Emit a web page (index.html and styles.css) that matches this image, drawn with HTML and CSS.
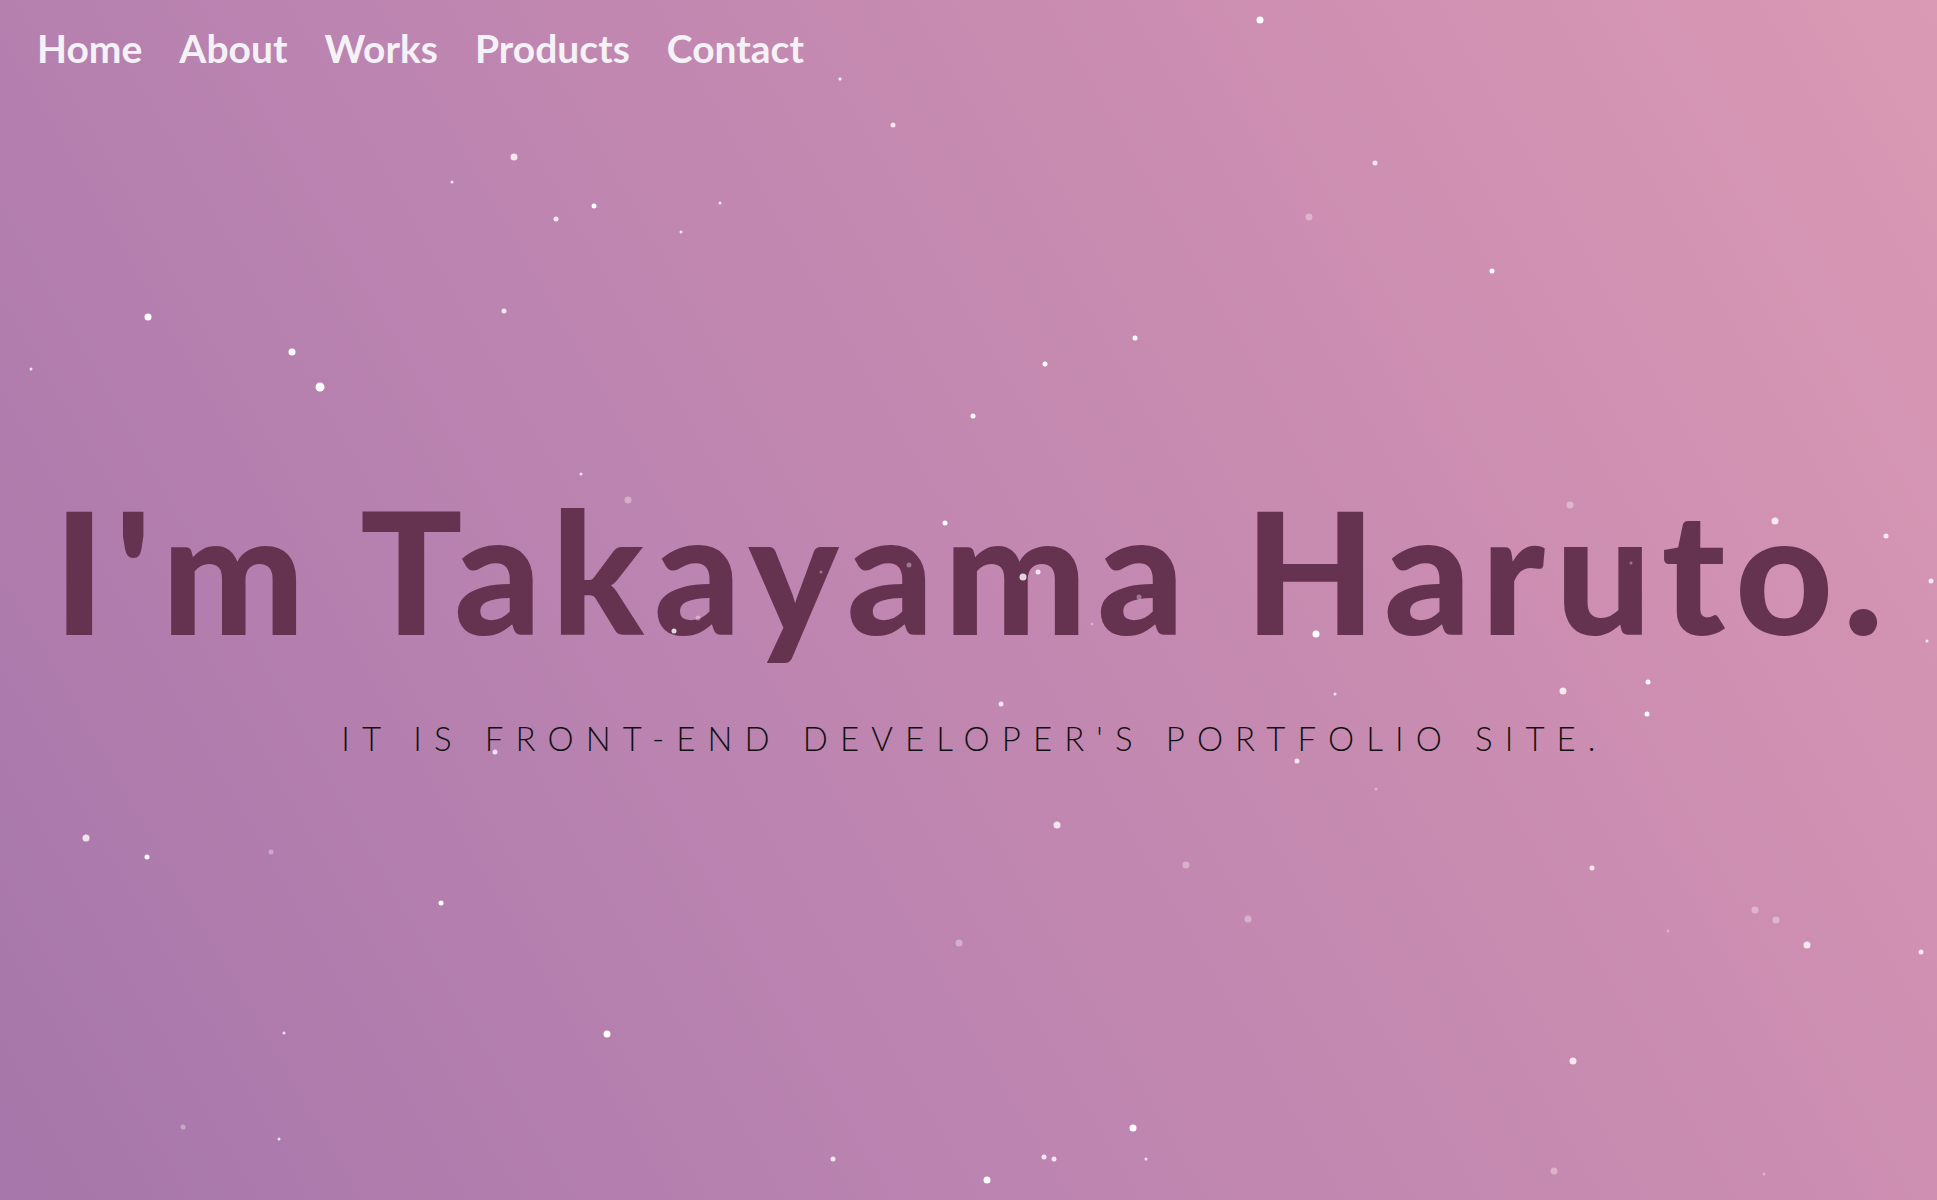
FILE: index.html
```html
<!DOCTYPE html>
<html lang="en">
<head>
<meta charset="utf-8">
<title>Takayama Haruto</title>
<link rel="stylesheet" href="styles.css">
</head>
<body>
<div class="page">
  <nav class="nav">
    <a href="#" class="nav-link">Home</a>
    <a href="#" class="nav-link">About</a>
    <a href="#" class="nav-link">Works</a>
    <a href="#" class="nav-link">Products</a>
    <a href="#" class="nav-link">Contact</a>
  </nav>
  <main class="hero">
    <h1 class="hero-title">I'm Takayama Haruto.</h1>
    <p class="hero-sub">IT IS FRONT-END DEVELOPER'S PORTFOLIO SITE.</p>
  </main>
  <div class="particles">
    <span class="dot d3" style="left:1260px;top:20px"></span>
    <span class="dot d1" style="left:840px;top:79px"></span>
    <span class="dot d2 faint" style="left:893px;top:125px"></span>
    <span class="dot d3 faint" style="left:514px;top:157px"></span>
    <span class="dot d2 faint" style="left:1375px;top:163px"></span>
    <span class="dot d1 faint" style="left:452px;top:182px"></span>
    <span class="dot d2" style="left:594px;top:206px"></span>
    <span class="dot d2 faint" style="left:556px;top:219px"></span>
    <span class="dot d1 faint" style="left:720px;top:203px"></span>
    <span class="dot d1 faint" style="left:681px;top:232px"></span>
    <span class="dot d3 dim" style="left:1309px;top:217px"></span>
    <span class="dot d2" style="left:1492px;top:271px"></span>
    <span class="dot d3" style="left:148px;top:317px"></span>
    <span class="dot d2 faint" style="left:504px;top:311px"></span>
    <span class="dot d3" style="left:292px;top:352px"></span>
    <span class="dot d2" style="left:1135px;top:338px"></span>
    <span class="dot d1 faint" style="left:31px;top:369px"></span>
    <span class="dot d4" style="left:320px;top:387px"></span>
    <span class="dot d2" style="left:1045px;top:364px"></span>
    <span class="dot d2" style="left:973px;top:416px"></span>
    <span class="dot d1 faint" style="left:581px;top:474px"></span>
    <span class="dot d3 dim" style="left:628px;top:500px"></span>
    <span class="dot d3 dim" style="left:1570px;top:505px"></span>
    <span class="dot d2" style="left:945px;top:523px"></span>
    <span class="dot d3 faint" style="left:1775px;top:521px"></span>
    <span class="dot d2 faint" style="left:1886px;top:536px"></span>
    <span class="dot d2 faint" style="left:1931px;top:581px"></span>
    <span class="dot d1 faint" style="left:1927px;top:641px"></span>
    <span class="dot d3" style="left:1316px;top:634px"></span>
    <span class="dot d3 faint" style="left:1563px;top:691px"></span>
    <span class="dot d2" style="left:1648px;top:682px"></span>
    <span class="dot d2" style="left:1647px;top:714px"></span>
    <span class="dot d1 faint" style="left:1335px;top:694px"></span>
    <span class="dot d2 faint" style="left:1001px;top:704px"></span>
    <span class="dot d2 faint" style="left:495px;top:752px"></span>
    <span class="dot d2 faint" style="left:1297px;top:761px"></span>
    <span class="dot d1 dim" style="left:1376px;top:789px"></span>
    <span class="dot d3 faint" style="left:1057px;top:825px"></span>
    <span class="dot d3 faint" style="left:86px;top:838px"></span>
    <span class="dot d2" style="left:147px;top:857px"></span>
    <span class="dot d2 dim" style="left:271px;top:852px"></span>
    <span class="dot d2 faint" style="left:1592px;top:868px"></span>
    <span class="dot d3 dim" style="left:1186px;top:865px"></span>
    <span class="dot d2" style="left:441px;top:903px"></span>
    <span class="dot d3 dim" style="left:1755px;top:910px"></span>
    <span class="dot d3 dim" style="left:1776px;top:920px"></span>
    <span class="dot d3 dim" style="left:1248px;top:919px"></span>
    <span class="dot d1 dim" style="left:1668px;top:931px"></span>
    <span class="dot d3 faint" style="left:1807px;top:945px"></span>
    <span class="dot d3 dim" style="left:959px;top:943px"></span>
    <span class="dot d2 faint" style="left:1921px;top:952px"></span>
    <span class="dot d3" style="left:607px;top:1034px"></span>
    <span class="dot d1 faint" style="left:284px;top:1033px"></span>
    <span class="dot d3 faint" style="left:1573px;top:1061px"></span>
    <span class="dot d2 dim" style="left:183px;top:1127px"></span>
    <span class="dot d3" style="left:1133px;top:1128px"></span>
    <span class="dot d1 faint" style="left:279px;top:1139px"></span>
    <span class="dot d2 faint" style="left:833px;top:1159px"></span>
    <span class="dot d2 faint" style="left:1044px;top:1157px"></span>
    <span class="dot d2 faint" style="left:1054px;top:1159px"></span>
    <span class="dot d1 faint" style="left:1146px;top:1159px"></span>
    <span class="dot d3 dim" style="left:1554px;top:1171px"></span>
    <span class="dot d3" style="left:987px;top:1180px"></span>
    <span class="dot d1 dim" style="left:1764px;top:1174px"></span>
    <span class="dot d3 faint" style="left:1023px;top:577px"></span>
    <span class="dot d2 faint" style="left:1038px;top:572px"></span>
    <span class="dot d2 dim" style="left:909px;top:565px"></span>
    <span class="dot d1 dim" style="left:821px;top:572px"></span>
    <span class="dot d2 dim" style="left:698px;top:618px"></span>
    <span class="dot d2 dim" style="left:1139px;top:597px"></span>
    <span class="dot d2 faint" style="left:674px;top:631px"></span>
    <span class="dot d1 dim" style="left:1092px;top:624px"></span>
    <span class="dot d1 dim" style="left:1631px;top:563px"></span>
  </div>
</div>
</body>
</html>
```

FILE: styles.css
```css
* {
  box-sizing: border-box;
}

html, body {
  margin: 0;
  padding: 0;
  height: 100%;
}

body {
  overflow: hidden;
  font-family: "Lato", "Noto Sans", sans-serif;
}

.page {
  position: relative;
  height: 100vh;
  display: flex;
  flex-direction: column;
  background: linear-gradient(60deg, #a676aa 0%, #ba83b0 35%, #cb8db1 70%, #da99b4 100%);
  overflow: hidden;
}

.nav {
  display: flex;
  gap: 37px;
  padding: 22px 37px 0;
}

.nav-link {
  color: #f4f2f7;
  text-decoration: none;
  font-weight: 700;
  font-size: 39px;
  line-height: 52px;
}

.hero {
  flex: 1;
  display: flex;
  flex-direction: column;
  align-items: center;
  padding-top: 410px;
}

.hero-title {
  margin: 0 -10px 0 0;
  font-size: 170px;
  font-weight: 900;
  line-height: 1;
  letter-spacing: 10px;
  color: #65334f;
  white-space: nowrap;
}

.hero-sub {
  margin: 65px -12px 0 0;
  font-size: 33px;
  font-weight: 300;
  line-height: 1.2;
  letter-spacing: 12.1px;
  color: #111;
  white-space: nowrap;
}

.particles {
  position: absolute;
  inset: 0;
  pointer-events: none;
}

.dot {
  position: absolute;
  border-radius: 50%;
  background: #fff;
  transform: translate(-50%, -50%);
}

.d1 { width: 3px; height: 3px; }
.d2 { width: 5px; height: 5px; }
.d3 { width: 7px; height: 7px; }
.d4 { width: 9px; height: 9px; }

.faint { opacity: 0.8; }
.dim { opacity: 0.35; }
```
